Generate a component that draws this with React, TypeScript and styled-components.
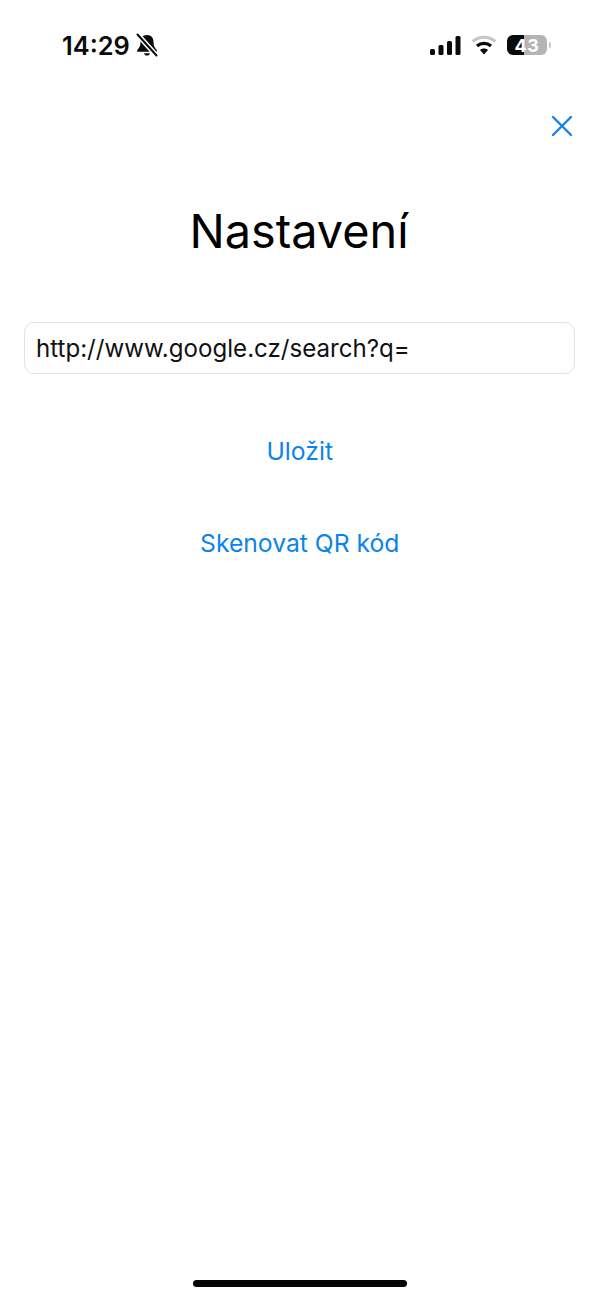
import React from "react";
import styled, { createGlobalStyle } from "styled-components";

const Global = createGlobalStyle`
  html, body { margin: 0; padding: 0; background: #fff; }
  body { font-family: Inter, "Liberation Sans", sans-serif; -webkit-font-smoothing: antialiased; }
`;

const Screen = styled.div`
  width: 598px;
  height: 1300px;
  display: flex;
  flex-direction: column;
  align-items: stretch;
  background: #fff;
  overflow: hidden;
`;

const StatusBar = styled.div`
  height: 90px;
  flex: none;
  box-sizing: border-box;
  padding: 29px 47px 0 62px;
  display: flex;
  justify-content: space-between;
  align-items: flex-start;
`;

const Group = styled.div<{ $gap: number }>`
  display: flex;
  align-items: center;
  gap: ${(p) => p.$gap}px;
  height: 32px;
`;

const Time = styled.span`
  font-size: 25.4px;
  font-weight: 600;
  color: #0a0a0a;
  letter-spacing: 0;
`;

const Battery = styled.div`
  position: relative;
  width: 40px;
  height: 20px;
  border-radius: 6px;
  overflow: hidden;
  background: linear-gradient(90deg, #0a0a0a 0 43%, #b4b4b4 43% 100%);
  display: flex;
  align-items: center;
  justify-content: center;
  color: #fff;
  font-size: 18px;
  font-weight: 700;
  letter-spacing: 0.5px;
`;

const BatteryWrap = styled.div`
  display: flex;
  align-items: center;
  gap: 2px;
`;

const BatteryTip = styled.div`
  width: 2px;
  height: 6px;
  border-radius: 0 2px 2px 0;
  background: #c4c4c4;
`;

const CloseRow = styled.div`
  display: flex;
  justify-content: flex-end;
  padding-right: 24px;
  height: 24px;
  margin-top: 24px;
`;

const Title = styled.h1`
  margin: 64px 0 0;
  height: 58px;
  line-height: 58px;
  text-align: center;
  font-size: 46.8px;
  font-weight: 400;
  color: #000;
  letter-spacing: 0;
`;

const Field = styled.div`
  margin: 62px 23px 0 24px;
  height: 52px;
  box-sizing: border-box;
  border: 1px solid #e4e4e6;
  border-radius: 10px;
  padding: 0 11px;
  display: flex;
  align-items: center;
  font-size: 24.1px;
  color: #111;
`;

const ActionLink = styled.button<{ $top: number }>`
  display: block;
  margin: ${(p) => p.$top}px auto 0;
  padding: 0 0 0 1.5px;
  border: 0;
  background: none;
  font-family: inherit;
  font-size: 24.7px;
  line-height: 32px;
  font-weight: 400;
  color: #0a84e8;
`;

const HomeBar = styled.div`
  margin: auto 0 13px 193px;
  width: 214px;
  height: 7px;
  border-radius: 4px;
  background: #050505;
`;

export default function App() {
  return (
    <Screen>
      <Global />
      <StatusBar>
        <Group $gap={5}>
          <Time>14:29</Time>
          <svg width="24" height="24" viewBox="0 0 24 24" aria-hidden="true">
            <path d="M12 2c-4.500 0-6.500 3-6.500 6.800 0 4-1 6-3.300 8.200v1.800h19.600V17c-2.300-2.200-3.300-4.200-3.300-8.200C18.500 5 16.500 2 12 2z" fill="#0a0a0a" />
            <path d="M9 20.200h6c-.4 1.500-1.500 2.300-3 2.300s-2.600-.8-3-2.300z" fill="#0a0a0a" />
            <path d="M3 2l18 20" stroke="#fff" strokeWidth="5" />
            <path d="M2.500 1.500l19 21" stroke="#0a0a0a" strokeWidth="2" strokeLinecap="round" />
          </svg>
        </Group>
        <Group $gap={10}>
          <svg width="31" height="19" viewBox="0 0 31 19" aria-hidden="true">
            <rect x="0" y="13" width="5" height="6" rx="1.500" fill="#0a0a0a" />
            <rect x="8.500" y="9" width="5" height="10" rx="1.500" fill="#0a0a0a" />
            <rect x="17" y="5" width="5" height="14" rx="1.500" fill="#0a0a0a" />
            <rect x="25.500" y="0" width="5" height="19" rx="1.500" fill="#0a0a0a" />
          </svg>
          <svg width="26" height="20" viewBox="0 0 26 20" aria-hidden="true">
            <path d="M1.500 6.500C8 .8 18 .8 24.500 6.500" fill="none" stroke="#c6c6c6" strokeWidth="3.200" />
            <path d="M6 11c4-3.600 10-3.600 14 0" fill="none" stroke="#0a0a0a" strokeWidth="3.200" />
            <path d="M13 19.500l-4-4.500c2.200-2 5.800-2 8 0z" fill="#0a0a0a" />
          </svg>
          <BatteryWrap>
            <Battery>43</Battery>
            <BatteryTip />
          </BatteryWrap>
        </Group>
      </StatusBar>
      <CloseRow>
        <svg width="24" height="24" viewBox="0 0 24 24" aria-label="Zavřít">
          <path d="M3 3l18 18M21 3L3 21" stroke="#1a7fe8" strokeWidth="2.400" strokeLinecap="round" />
        </svg>
      </CloseRow>
      <Title>Nastavení</Title>
      <Field>http://www.google.cz/search?q=</Field>
      <ActionLink $top={61}>Uložit</ActionLink>
      <ActionLink $top={60}>Skenovat QR kód</ActionLink>
      <HomeBar />
    </Screen>
  );
}
